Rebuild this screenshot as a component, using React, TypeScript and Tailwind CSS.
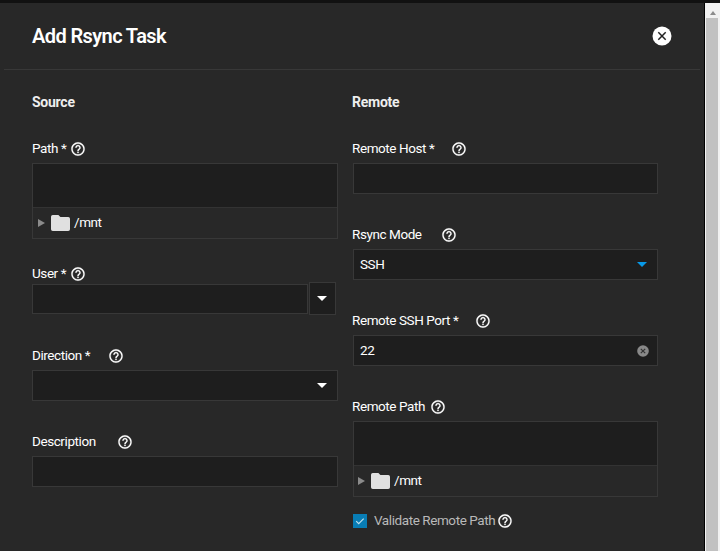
import React from 'react';

function Help() {
  return (
    <svg viewBox="0 0 24 24" className="ml-[0.4px] size-4 shrink-0 fill-white stroke-white" strokeWidth="0.3">
      <path d="M11 18h2v-2h-2v2zm1-16C6.48 2 2 6.48 2 12s4.48 10 10 10 10-4.48 10-10S17.52 2 12 2zm0 18c-4.41 0-8-3.59-8-8s3.59-8 8-8 8 3.59 8 8-3.59 8-8 8zm0-14c-2.21 0-4 1.79-4 4h2c0-1.1.9-2 2-2s2 .9 2 2c0 2-3 1.75-3 5h2c0-2.25 3-2.5 3-5 0-2.21-1.79-4-4-4z" />
    </svg>
  );
}

function Label({ text, width }: { text: string; width: string }) {
  return (
    <div className="flex h-5 items-center">
      <span className={`${width} shrink-0 pb-0.5 whitespace-nowrap`}>{text}</span>
      <Help />
    </div>
  );
}

function Caret({ color }: { color: string }) {
  return (
    <svg viewBox="0 0 10 5" className={`h-[5px] w-[10px] shrink-0 ${color}`}>
      <path d="M0 0h10L5 5z" />
    </svg>
  );
}

function PathTree({ indent }: { indent: string }) {
  return (
    <div className="h-[76px] border border-[#383838]">
      <div className="h-11 border-b border-[#333333] bg-[#1e1e1e]" />
      <div className={`flex h-[30px] items-center ${indent}`}>
        <svg viewBox="0 0 7 8" className="h-2 w-[7px] fill-[#8b8b8b]">
          <path d="M0 0l7 4-7 4z" />
        </svg>
        <svg viewBox="0 0 19 16" className="ml-1.5 h-4 w-[19px] fill-[#e0e0e0]">
          <path d="M1.8 0h5.6l2 2h7.8Q19 2 19 3.8v10.4Q19 16 17.2 16H1.8Q0 16 0 14.2V1.8Q0 0 1.8 0z" />
        </svg>
        <span className="ml-1 pb-0.5">/mnt</span>
      </div>
    </div>
  );
}

const field = 'flex h-[31px] items-center justify-between border border-[#383838] bg-[#1e1e1e]';

export default function App() {
  return (
    <div className="flex h-[551px] w-[720px] flex-col overflow-hidden bg-[#282828] font-[Roboto,sans-serif] text-[13.5px] leading-5 tracking-[-0.42px] text-white">
      <div className="h-[3px] shrink-0 bg-[#111111]" />
      <div className="flex min-h-0 flex-1">
        <main className="w-[705px] shrink-0 border-r border-black">
          <header className="mx-1 flex h-[67px] items-center justify-between border-b border-[#383838] pr-[28px] pl-7">
            <h1 className="text-[20px] font-semibold tracking-[-0.6px] whitespace-nowrap">Add Rsync Task</h1>
            <svg viewBox="0 0 20 20" className="size-5">
              <circle cx="10" cy="10" r="9.5" fill="white" />
              <path d="M6.3 6.3l7.4 7.4m0-7.4l-7.4 7.4" stroke="#222222" strokeWidth="1.5" />
            </svg>
          </header>
          <div className="flex gap-[14px] pt-[22px] pl-8">
            <section className="w-[306px]">
              <h2 className="text-sm leading-5 font-bold tracking-[-0.25px] text-[#eeeeee]">Source</h2>
              <div className="mt-[27px]"><Label text="Path *" width="w-[38px]" /></div>
              <div className="mt-1"><PathTree indent="pl-[5px]" /></div>
              <div className="mt-[25px]"><Label text="User *" width="w-[38px]" /></div>
              <div className="-mt-px flex h-[32px] items-start gap-px">
                <div className="mt-px h-[30px] w-[276px] border border-[#383838] bg-[#1e1e1e]" />
                <div className="-mt-px flex h-[33px] w-[27px] items-center justify-center border border-[#383838] bg-[#1e1e1e] pr-[2px]">
                  <Caret color="fill-white" />
                </div>
              </div>
              <div className="mt-[31px]"><Label text="Direction *" width="w-[76px]" /></div>
              <div className={`mt-1 pr-[10px] ${field}`}><span /><Caret color="fill-white" /></div>
              <div className="mt-[31px]"><Label text="Description" width="w-[85px]" /></div>
              <div className={`mt-1 ${field}`} />
            </section>
            <section className="w-[306px]">
              <h2 className="text-sm leading-5 font-bold tracking-[-0.25px] text-[#eeeeee]">Remote</h2>
              <div className="mt-[27px]"><Label text="Remote Host *" width="w-[99px]" /></div>
              <div className={`mt-1 ml-px ${field}`} />
              <div className="mt-[31px]"><Label text="Rsync Mode" width="w-[89px]" /></div>
              <div className={`mt-1 ml-px pr-[10px] pl-[6px] ${field}`}>
                <span className="pb-0.5">SSH</span>
                <Caret color="fill-[#0899e8]" />
              </div>
              <div className="mt-[31px]"><Label text="Remote SSH Port *" width="w-[123px]" /></div>
              <div className={`mt-1 ml-px pr-2 pl-[6px] ${field}`}>
                <span className="pb-0.5">22</span>
                <svg viewBox="0 0 12 12" className="size-3">
                  <circle cx="6" cy="6" r="5.8" fill="#898989" />
                  <path d="M3.8 3.8l4.4 4.4m0-4.4L3.8 8.2" stroke="#333333" strokeWidth="1.2" />
                </svg>
              </div>
              <div className="mt-[31px]"><Label text="Remote Path" width="w-[78px]" /></div>
              <div className="mt-1 ml-px"><PathTree indent="pl-1" /></div>
              <div className="mt-[14px] flex h-5 items-center text-[#b9b9b9]">
                <span className="mr-[7px] ml-px flex size-[14px] items-center justify-center bg-[#087db5]">
                  <svg viewBox="0 0 10 10" className="size-[10px]">
                    <path d="M1.2 5.2l2.5 2.5 5-5" fill="none" stroke="#bfe0ed" strokeWidth="1.2" />
                  </svg>
                </span>
                <span className="w-[123px] shrink-0 pb-0.5 whitespace-nowrap">Validate Remote Path</span>
                <Help />
              </div>
            </section>
          </div>
        </main>
        <aside className="flex w-[15px] flex-col items-center bg-[#f1f1f1]">
          <div className="flex h-[15px] items-center">
            <svg viewBox="0 0 6 4" className="mt-1 h-1 w-1.5 fill-[#8b8b8b]">
              <path d="M3 0l3 4H0z" />
            </svg>
          </div>
          <div className="mr-px w-3 flex-1 bg-[#c1c1c1]" />
        </aside>
      </div>
    </div>
  );
}
